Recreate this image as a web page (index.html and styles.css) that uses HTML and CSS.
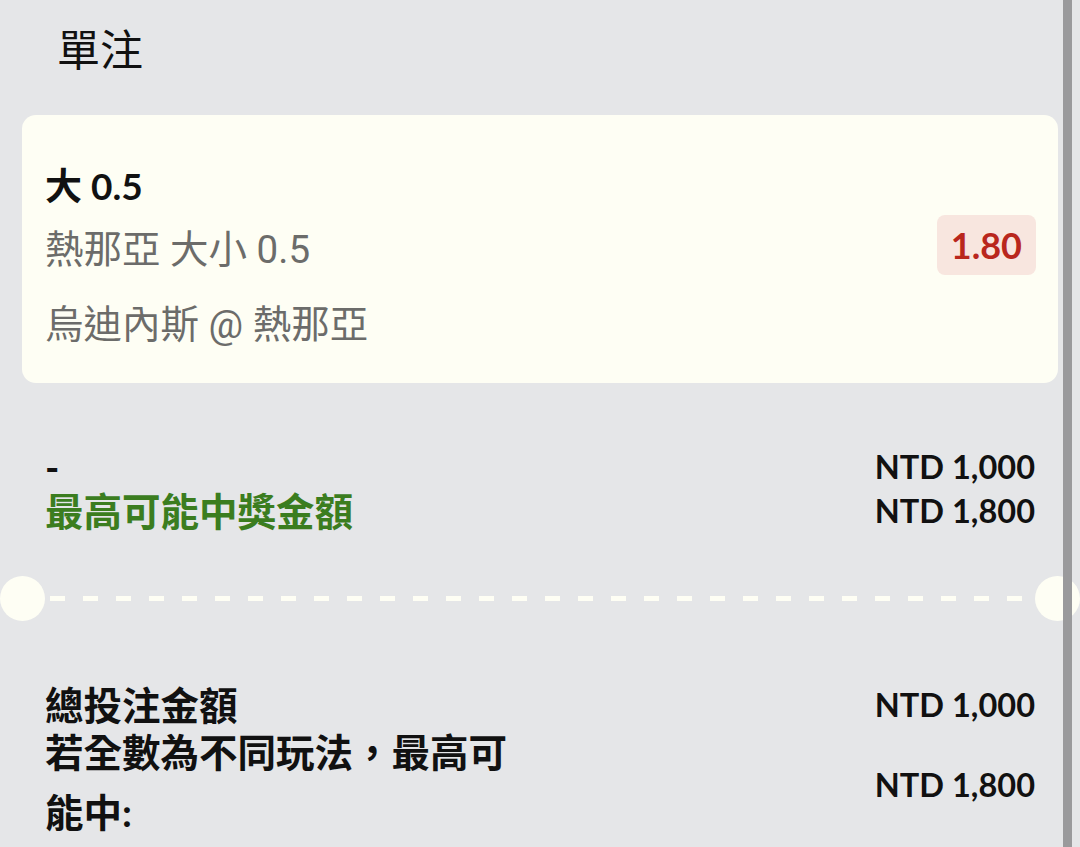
FILE: index.html
```html
<!DOCTYPE html>
<html lang="zh-Hant">
<head>
    <meta charset="UTF-8">
    <meta name="viewport" content="width=device-width, initial-scale=1.0">
    <title>單注</title>
    <link rel="stylesheet" href="styles.css">
</head>
<body>
    <h1 class="slip-title">單注</h1>

    <div class="bet-card">
        <div class="bet-info">
            <div class="bet-pick">大 0.5</div>
            <div class="bet-market">熱那亞 大小 0.5</div>
            <div class="bet-match">烏迪內斯 @ 熱那亞</div>
        </div>
        <div class="bet-odds">1.80</div>
    </div>

    <div class="stake-rows">
        <div class="stake-label">-</div>
        <div class="amount">NTD 1,000</div>
        <div class="stake-label win">最高可能中獎金額</div>
        <div class="amount">NTD 1,800</div>
    </div>

    <div class="ticket-cut">
        <span class="notch"></span>
        <span class="dash-line"></span>
        <span class="notch"></span>
    </div>

    <div class="summary">
        <div class="summary-label">總投注金額</div>
        <div class="amount">NTD 1,000</div>
        <div class="summary-label wrap">若全數為不同玩法，最高可能中:</div>
        <div class="amount">NTD 1,800</div>
    </div>

    <div class="scroll-bar"></div>
</body>
</html>
```

FILE: styles.css
```css
/* Bet slip */
* { box-sizing: border-box; margin: 0; padding: 0; }
body { font-family: Lato, "Noto Sans CJK TC", sans-serif; background-color: #e5e6e8; color: #111; width: 1080px; min-height: 100vh; overflow: hidden; }

.slip-title { font-size: 43px; font-weight: 400; line-height: 60px; padding: 20px 0 0 57px; margin-bottom: 35px; }

.bet-card { display: flex; align-items: center; justify-content: space-between; margin: 0 22px; height: 268px; padding: 0 22px 0 23px; background-color: #fefef4; border-radius: 14px; }
.bet-info { padding-top: 14px; }
.bet-pick { font-size: 37px; font-weight: 700; line-height: 48px; }
.bet-market, .bet-match { font-family: Roboto, "Noto Sans CJK TC", sans-serif; font-size: 38.5px; line-height: 50px; color: #6c6c6a; }
.bet-market { margin-top: 15px; }
.bet-match { margin-top: 25px; }
.bet-odds { font-size: 36px; font-weight: 700; line-height: 60px; padding: 0 14px; margin-bottom: 8px; color: #b9271d; background-color: #f8e6df; border-radius: 8px; }

.stake-rows { display: grid; grid-template-columns: 1fr auto; align-items: center; padding: 0 45px; margin-top: 62px; }
.stake-label { font-size: 38.5px; font-weight: 700; line-height: 44px; }
.stake-label.win { color: #3b7d1f; }
.amount { font-size: 32.5px; font-weight: 700; line-height: 44px; text-align: right; }

.ticket-cut { display: flex; align-items: center; margin-top: 43px; }
.notch { width: 45px; height: 45px; border-radius: 50%; background-color: #fefef4; flex-shrink: 0; }
.dash-line { flex: 1; height: 5px; margin: 0 5px; background: repeating-linear-gradient(90deg, #fefef4 0 15px, transparent 15px 33px); }

.summary { display: grid; grid-template-columns: 470px 1fr; align-items: center; padding: 0 45px; margin-top: 62px; }
.summary-label { font-size: 38.5px; font-weight: 700; line-height: 44px; }
.summary-label.wrap { line-height: 60px; margin-top: -5px; }

.scroll-bar { position: fixed; top: 0; bottom: 0; right: 8px; width: 9px; background-color: #9a9a9c; }
```
